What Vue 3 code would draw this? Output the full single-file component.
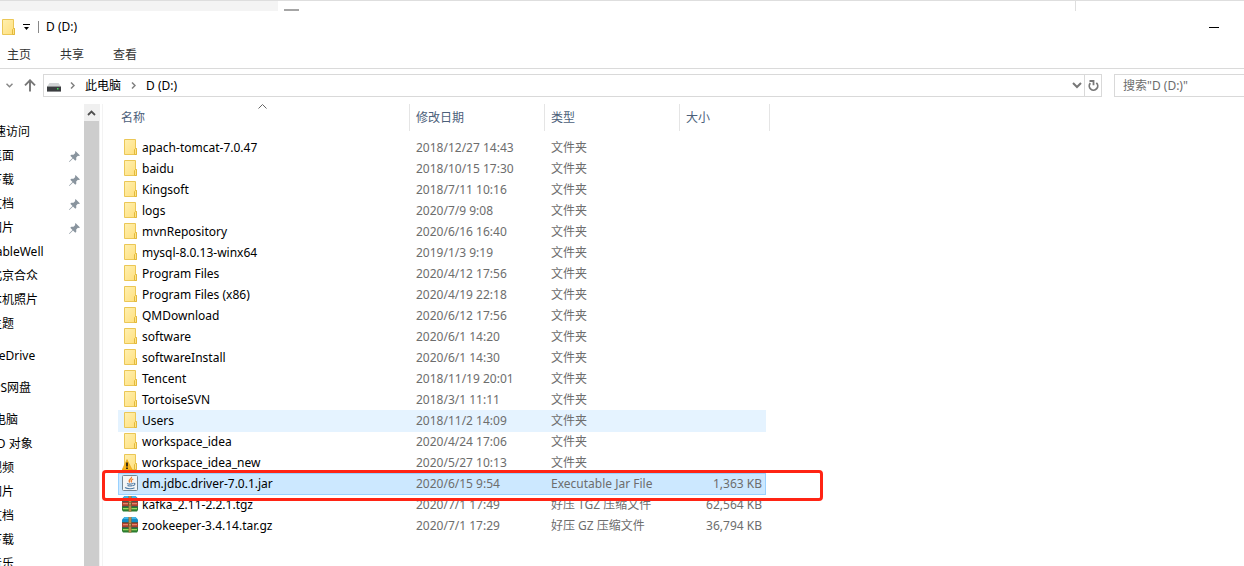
<script setup>
import { ref } from 'vue'

const tabs = ['主页', '共享', '查看']

const places = [
  { name: '快速访问', root: true },
  { name: '桌面', pinned: true },
  { name: '下载', pinned: true },
  { name: '文档', pinned: true },
  { name: '图片', pinned: true },
  { name: 'TableWell' },
  { name: '北京合众' },
  { name: '本机照片' },
  { name: '主题' },
  { name: 'OneDrive', root: true, gap: true },
  { name: 'WPS网盘', root: true, gap: true },
  { name: '此电脑', root: true, gap: true },
  { name: '3D 对象' },
  { name: '视频' },
  { name: '图片' },
  { name: '文档' },
  { name: '下载' },
  { name: '音乐' },
]

const folder = (name, date, icon = 'folder') => ({ name, date, icon, type: '文件夹', size: '' })

const files = [
  folder('apach-tomcat-7.0.47', '2018/12/27 14:43'),
  folder('baidu', '2018/10/15 17:30'),
  folder('Kingsoft', '2018/7/11 10:16'),
  folder('logs', '2020/7/9 9:08'),
  folder('mvnRepository', '2020/6/16 16:40'),
  folder('mysql-8.0.13-winx64', '2019/1/3 9:19'),
  folder('Program Files', '2020/4/12 17:56'),
  folder('Program Files (x86)', '2020/4/19 22:18'),
  folder('QMDownload', '2020/6/12 17:56'),
  folder('software', '2020/6/1 14:20'),
  folder('softwareInstall', '2020/6/1 14:30'),
  folder('Tencent', '2018/11/19 20:01'),
  folder('TortoiseSVN', '2018/3/1 11:11'),
  folder('Users', '2018/11/2 14:09'),
  folder('workspace_idea', '2020/4/24 17:06'),
  folder('workspace_idea_new', '2020/5/27 10:13', 'warning'),
  { name: 'dm.jdbc.driver-7.0.1.jar', date: '2020/6/15 9:54', type: 'Executable Jar File', size: '1,363 KB', icon: 'jar' },
  { name: 'kafka_2.11-2.2.1.tgz', date: '2020/7/1 17:49', type: '好压 TGZ 压缩文件', size: '62,564 KB', icon: 'archive' },
  { name: 'zookeeper-3.4.14.tar.gz', date: '2020/7/1 17:29', type: '好压 GZ 压缩文件', size: '36,794 KB', icon: 'archive' },
]

const selected = ref('dm.jdbc.driver-7.0.1.jar')
const hovered = ref('Users')
const query = ref('')
</script>

<template>
  <div class="explorer">
    <svg class="defs" aria-hidden="true">
      <linearGradient id="paper" x1="0" y1="0" x2="1" y2="1">
        <stop offset="0" stop-color="#fff0b0" />
        <stop offset="1" stop-color="#ffdf7c" />
      </linearGradient>
      <symbol id="folder" viewBox="0 0 16 16">
        <path d="M2.500.5h11v9h1v6h-12z" fill="url(#paper)" stroke="#ebc756" />
        <path d="M12.500 15.500v-5l1-1h1v6z" fill="#ffe488" stroke="#e3b93c" />
      </symbol>
    </svg>

    <div class="backdrop">
      <div class="backdrop-tab"></div>
      <div class="backdrop-dash"></div>
      <div class="backdrop-end"></div>
    </div>

    <header class="title">
      <svg class="icon" viewBox="0 0 16 16"><use href="#folder" /></svg>
      <button class="quick" aria-label="自定义快速访问工具栏">
        <svg width="8" height="8" viewBox="0 0 8 8"><path d="M0 1.500h7" stroke="#000" /><path d="M1 4h5L3.500 7z" /></svg>
      </button>
      <span class="divider"></span>
      <span class="caption">D (D:)</span>
      <button class="minimize" aria-label="最小化"></button>
    </header>

    <nav class="ribbon">
      <button v-for="tab in tabs" :key="tab">{{ tab }}</button>
    </nav>

    <div class="location">
      <button class="history" aria-label="最近浏览的位置">
        <svg width="7" height="5" viewBox="0 0 7 5"><path d="M.5.8l3 3 3-3" fill="none" stroke="#888" stroke-width="1.500" /></svg>
      </button>
      <button class="up" aria-label="上移">
        <svg width="12" height="13" viewBox="0 0 12 13"><path d="M6 12.500V1.500M1 6.300l5-5 5 5" fill="none" stroke="#777" stroke-width="1.900" /></svg>
      </button>
      <div class="address">
        <svg class="drive" width="14" height="9" viewBox="0 0 14 9">
          <path d="M2.500 0h9L14 3.500H0z" fill="#d2d4d6" />
          <path d="M0 3.500h14V8H0z" fill="#3b3d40" />
          <path d="M0 8h14v1H0z" fill="#8b8d8f" />
          <path d="M10 5h1.500v1.500H10z" fill="#42e15b" />
        </svg>
        <svg class="crumb-arrow" width="5" height="7" viewBox="0 0 5 7"><path d="M1 .5l3 3-3 3" fill="none" stroke="#808080" stroke-width="1.500" /></svg>
        <button class="crumb">此电脑</button>
        <svg class="crumb-arrow" width="5" height="7" viewBox="0 0 5 7"><path d="M1 .5l3 3-3 3" fill="none" stroke="#808080" stroke-width="1.500" /></svg>
        <button class="crumb">D (D:)</button>
        <button class="expand" aria-label="以前的位置">
          <svg width="10" height="7" viewBox="0 0 10 7"><path d="M1 1l4 4 4-4" fill="none" stroke="#777" stroke-width="2" /></svg>
        </button>
        <button class="refresh" aria-label="刷新">
          <svg width="11" height="12" viewBox="0 0 11 12">
            <path d="M8.300 2.800a4.200 4.200 0 1 1-6 .4" fill="none" stroke="#777" stroke-width="1.800" />
            <path d="M1.500 1H5.500v4.300" fill="none" stroke="#777" stroke-width="1.800" />
          </svg>
        </button>
      </div>
      <input v-model="query" class="search" type="text" aria-label="搜索" placeholder="搜索&quot;D (D:)&quot;" />
    </div>

    <div class="body">
      <nav class="places">
        <a v-for="(place, i) in places" :key="i" href="#" :class="{ root: place.root, gap: place.gap }">
          <span>{{ place.name }}</span>
          <svg v-if="place.pinned" class="pin" width="11" height="11" viewBox="0 0 11 11">
            <path d="M6.500 0L11 4.500l-1.300.5-.8-.3-1.700 1.800.1 2.200-1 1L4 7.400.7 10.700 0 11l.3-.8L3.500 6.900 1.300 4.700l1-1 2.200.1L6.300 2 6 1.300z" fill="#89949e" />
          </svg>
        </a>
      </nav>

      <div class="scrollbar">
        <button aria-label="向上滚动">
          <svg width="9" height="6" viewBox="0 0 9 6"><path d="M1 5l3.500-3.500L8 5" fill="none" stroke="#505050" stroke-width="1.800" /></svg>
        </button>
        <div class="thumb"></div>
      </div>

      <main class="content">
        <table>
          <thead>
            <tr>
              <th scope="col">
                名称
                <svg class="sort" width="9" height="5" viewBox="0 0 9 5"><path d="M.5 4.500l4-4 4 4" fill="none" stroke="#666" /></svg>
              </th>
              <th scope="col">修改日期</th>
              <th scope="col">类型</th>
              <th scope="col">大小</th>
            </tr>
          </thead>
          <tbody @mouseleave="hovered = ''">
            <tr
              v-for="file in files"
              :key="file.name"
              :class="{ selected: file.name === selected, hovered: file.name === hovered }"
              @click="selected = file.name"
              @mouseenter="hovered = file.name"
            >
              <td class="name">
                <svg v-if="file.icon === 'folder'" class="icon" viewBox="0 0 16 16"><use href="#folder" /></svg>
                <svg v-else-if="file.icon === 'warning'" class="icon" viewBox="0 0 16 16">
                  <use href="#folder" />
                  <path d="M5 5.500L10.300 16H0z" fill="#f9b51c" stroke="#e39b0c" stroke-width=".5" />
                  <path d="M4.200 8.500h1.600v4H4.200zM4.200 13.500h1.600V15H4.200z" fill="#111" />
                </svg>
                <svg v-else-if="file.icon === 'jar'" class="icon" viewBox="0 0 16 16">
                  <rect x=".5" y=".5" width="15" height="15" rx="1" fill="#f3f5f6" stroke="#748591" />
                  <path d="M9.500 1.800c.8 2.200-4.200 2.700-1.700 5.700M11.300 4c-2.300.8-2.600 1.800-1.500 3.300" fill="none" stroke="#ed8133" stroke-width="1.300" />
                  <path d="M5 8.500c1.500.7 4 .7 6 0M5.500 10.500c1.500.6 3.500.6 5 0M3 12.500c2.500 1.700 7.500 1.500 9.500.3M11.300 8.300c2.600-.3 1.900 1.900-.5 2.500" fill="none" stroke="#527da5" stroke-width="1.100" />
                </svg>
                <svg v-else class="icon" viewBox="0 0 16 16">
                  <path d="M2.500 0h11L16 2.500V5H0V2.500z" fill="#128cc6" />
                  <path d="M2.500 0h11L15 2H1z" fill="#3fb6e8" />
                  <path d="M0 5.500h16V10H0z" fill="#a8402e" />
                  <path d="M1 7h14v1.300H1z" fill="#e8826a" />
                  <path d="M0 10.500h16V14l-1 1.500H1L0 14z" fill="#2b7d30" />
                  <path d="M1 12h14v1.300H1z" fill="#9bd85c" />
                  <path d="M0 5h16v.7H0zM0 10h16v.7H0z" fill="#243c35" />
                  <path d="M6.500 0h3v15.500h-3z" fill="#8d6a34" />
                  <path d="M7.300 0h1.400v15.500H7.300z" fill="#c99a55" />
                  <path d="M6.200 6.500h3.600v2.800H6.200z" fill="#6b4c24" />
                  <path d="M7.200 7.200h1.600v1.400H7.200z" fill="#f4d991" />
                </svg>
                <span>{{ file.name }}</span>
              </td>
              <td>{{ file.date }}</td>
              <td>{{ file.type }}</td>
              <td class="size">{{ file.size }}<span v-if="file.icon === 'jar'" class="marker"></span></td>
            </tr>
          </tbody>
        </table>
      </main>
    </div>
  </div>
</template>

<style>
body {
  margin: 0;
  background: #fff;
}
</style>

<style scoped>
.explorer {
  display: flex;
  flex-direction: column;
  height: 100vh;
  overflow: hidden;
  background: #fff;
  color: #000;
  font: 12px/16px 'Noto Sans', 'Noto Sans CJK SC', sans-serif;
}
.explorer * {
  box-sizing: border-box;
}
button {
  margin: 0;
  padding: 0;
  border: 0;
  background: none;
  color: inherit;
  font: inherit;
}
svg {
  display: block;
  flex: none;
}
.defs {
  position: absolute;
  width: 0;
  height: 0;
}
.icon {
  width: 16px;
  height: 16px;
}

.backdrop {
  display: flex;
  flex: none;
  height: 11px;
  border-top: 1px solid #dedede;
}
.backdrop-tab {
  width: 278px;
  background: #f4f4f4;
}
.backdrop-dash {
  align-self: flex-end;
  width: 15px;
  height: 2px;
  margin-left: 6px;
  background: #a5a5a5;
}
.backdrop-end {
  width: 169px;
  margin-left: auto;
  border-left: 1px solid #dedede;
}

.title {
  display: flex;
  flex: none;
  align-items: center;
  height: 32px;
  padding-right: 25px;
}
.quick {
  margin-left: 7px;
}
.divider {
  width: 1px;
  height: 12px;
  margin: 0 7px;
  background: #888;
}
.minimize {
  width: 10px;
  height: 1px;
  margin-left: auto;
  background: #000;
}

.ribbon {
  display: flex;
  flex: none;
  gap: 29px;
  height: 26px;
  padding-left: 7px;
  border-bottom: 1px solid #dadada;
  color: #333;
}
.ribbon button {
  height: 24px;
}

.location {
  display: flex;
  flex: none;
  align-items: center;
  height: 35px;
  padding-bottom: 2px;
}
.history {
  margin-left: 6px;
}
.up {
  margin: 0 7px 0 11px;
}
.address {
  display: flex;
  flex: 1;
  align-items: center;
  height: 23px;
  border: 1px solid #d9d9d9;
}
.drive {
  margin: 4px 9px 0 3px;
}
.crumb {
  margin: 0 10px;
}
.expand {
  margin-left: auto;
  padding-right: 2px;
}
.refresh {
  display: flex;
  align-items: center;
  justify-content: center;
  align-self: stretch;
  width: 17px;
  border-left: 1px solid #d9d9d9;
}
.search {
  width: 130px;
  height: 23px;
  margin-left: 12px;
  padding: 0 8px;
  border: 1px solid #d9d9d9;
  border-right: 0;
  border-radius: 0;
  outline: 0;
  font: inherit;
}
.search::placeholder {
  color: #6d6d6d;
  opacity: 1;
}

.body {
  display: flex;
  flex: 1;
  min-height: 0;
}
.places {
  flex: none;
  width: 84px;
  padding-top: 16px;
  overflow: hidden;
}
.places a {
  display: flex;
  align-items: center;
  justify-content: space-between;
  height: 24px;
  margin-left: -10px;
  padding-right: 4px;
  color: #000;
  text-decoration: none;
  white-space: nowrap;
}
.places .root {
  margin-left: -18px;
}
.places .gap {
  margin-top: 8px;
}
.scrollbar {
  display: flex;
  flex: none;
  flex-direction: column;
  width: 16px;
  padding-right: 1px;
  background: #f0f0f0;
}
.scrollbar button {
  display: flex;
  align-items: center;
  justify-content: center;
  height: 17px;
}
.thumb {
  flex: 1;
  background: #cdcdcd;
}
.content {
  flex: 1;
  min-width: 0;
  margin-left: 2px;
  padding-left: 15px;
  border-left: 1px solid #f3f3f3;
}

table,
thead,
tbody {
  display: block;
}
tbody {
  padding-top: 6px;
}
tr {
  display: grid;
  grid-template-columns: 292px 135px 135px 86px;
  width: 648px;
}
thead tr {
  grid-template-columns: 292px 135px 135px 90px;
  width: 652px;
}
th {
  position: relative;
  height: 27px;
  padding: 0 6px;
  border-right: 1px solid #e5e5e5;
  color: #4c607a;
  font-weight: 400;
  line-height: 27px;
  text-align: left;
}
th:first-child {
  padding-left: 3px;
}
.sort {
  position: absolute;
  top: 0;
  left: 50%;
  margin-left: -6px;
}
tbody tr {
  position: relative;
  height: 22px;
  margin-bottom: -1px;
}
td {
  height: 21px;
  padding: 0 0 0 6px;
  color: #6d6d6d;
  line-height: 21px;
  white-space: nowrap;
}
.name {
  display: flex;
  align-items: flex-start;
  gap: 4px;
  padding-top: 2px;
  padding-left: 4px;
  color: #000;
  line-height: 18px;
}
.size {
  padding-right: 4px;
  text-align: right;
}
.hovered {
  background: #e5f3ff;
}
.selected {
  background: #cce8ff;
  box-shadow: inset 0 0 0 1px #99d1ff;
}
.marker {
  position: absolute;
  z-index: 1;
  inset: -3px -57px -6px -16px;
  border: 3px solid #ff2414;
  border-radius: 4px;
  pointer-events: none;
}
</style>
